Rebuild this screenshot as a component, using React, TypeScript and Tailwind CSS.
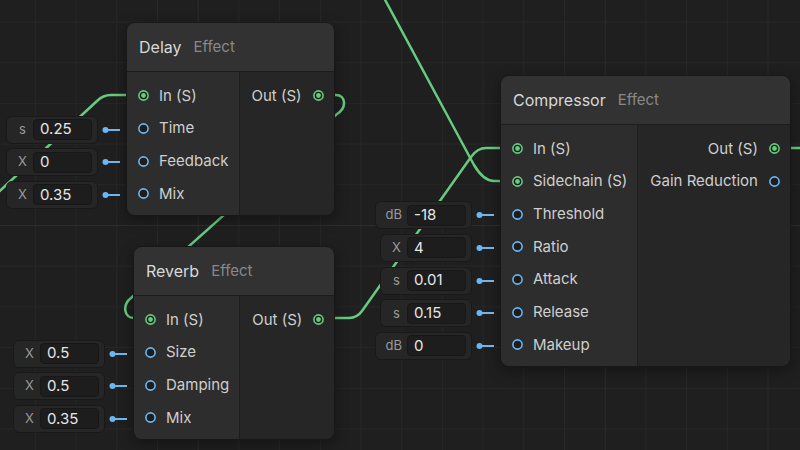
import React from 'react';

type Field = { unit: string; value: string };
type Port = { label: string; signal?: boolean; field?: Field };

interface NodeProps {
  x: number;
  y: number;
  title: string;
  inputs: Port[];
  outputs: Port[];
}

const GREEN = '#66cb7f';
const BLUE = '#6cb6f0';

function Socket({ signal }: { signal?: boolean }) {
  return (
    <svg width="11" height="11" viewBox="0 0 11 11" className="shrink-0">
      <circle cx="5.5" cy="5.5" r="4.6" fill="#1c1c1c" stroke={signal ? GREEN : BLUE} strokeWidth="1.6" />
      {signal && <circle cx="5.5" cy="5.5" r="2.4" fill={GREEN} />}
    </svg>
  );
}

function ValueField({ unit, value }: Field) {
  return (
    <div className="flex items-center gap-[4px]">
      <div className="flex items-center h-[28px] px-[5px] rounded-[6px] bg-[#262626] border border-[#191919]">
        <span className="min-w-[21px] px-[5px] text-center text-[13px] text-[#9a9a9a]">{unit}</span>
        <div className="w-[59px] h-[21px] flex items-center pl-[6px] rounded-[4px] bg-[#1d1d1d] border border-[#171717] text-[15px] text-[#e6e6e6]">
          {value}
        </div>
      </div>
      <svg width="18" height="8" viewBox="0 0 18 8">
        <line x1="3.5" y1="4" x2="18" y2="4" stroke={BLUE} strokeWidth="2" />
        <circle cx="3.5" cy="4" r="3" fill={BLUE} />
      </svg>
    </div>
  );
}

function GraphNode({ x, y, title, inputs, outputs }: NodeProps) {
  return (
    <div className="absolute" style={{ left: x, top: y }}>
      {/* parameter fields wired into the node from the left */}
      <div className="absolute right-full top-[51px] pt-[7.5px] mr-[6px] flex flex-col items-end">
        {inputs.map((p, i) => (
          <div key={i} className="h-[32.7px] flex items-center">
            {p.field && <ValueField {...p.field} />}
          </div>
        ))}
      </div>

      <div className="rounded-[9px] border border-[#181818] overflow-hidden shadow-[0_4px_14px_rgba(0,0,0,0.35)]">
        <div className="h-[49px] flex items-center gap-3 px-3 bg-[#323232] border-b border-[#1c1c1c]">
          <span className="text-[16px] text-[#d8d8d8]">{title}</span>
          <span className="text-[15px] text-[#888888]">Effect</span>
        </div>
        <div className="flex">
          <div className="pl-[11px] pr-[10px] pt-[7.5px] pb-[5px] bg-[#2d2d2d] border-r border-[#1e1e1e]">
            {inputs.map((p, i) => (
              <div key={i} className="h-[32.7px] flex items-center gap-[10px]">
                <Socket signal={p.signal} />
                <span className="text-[15px] text-[#cfcfcf] whitespace-nowrap">{p.label}</span>
              </div>
            ))}
          </div>
          <div className="flex-1 pl-3 pr-[10px] pt-[7.5px] pb-[5px] bg-[#262626]">
            {outputs.map((p, i) => (
              <div key={i} className="h-[32.7px] flex items-center justify-end gap-[11px]">
                <span className="text-[15px] text-[#cfcfcf] whitespace-nowrap">{p.label}</span>
                <Socket signal={p.signal} />
              </div>
            ))}
          </div>
        </div>
      </div>
    </div>
  );
}

function Grid() {
  const xs = Array.from({ length: 21 }, (_, k) => 35.4 + (k - 1) * 40.7);
  const ys = Array.from({ length: 13 }, (_, k) => 22 + (k - 1) * 40.7);
  return (
    <svg className="absolute inset-0" width="800" height="450">
      {xs.map((v, k) => (
        <line key={'x' + k} x1={v} y1="0" x2={v} y2="450" stroke={k === 5 || k === 15 ? '#2e2e2e' : '#282828'} strokeWidth="1" />
      ))}
      {ys.map((v, k) => (
        <line key={'y' + k} x1="0" y1={v} x2="800" y2={v} stroke={k === 6 ? '#2e2e2e' : '#282828'} strokeWidth="1" />
      ))}
    </svg>
  );
}

function Wires() {
  return (
    <svg className="absolute inset-0" width="800" height="450" fill="none" stroke={GREEN} strokeWidth="2.5" strokeLinecap="round">
      <path d="M 383 -4 L 474 165 Q 483.6 181 494 181 L 502 181" />
      <path d="M 330 318 L 349 318 Q 357 318 362 311 L 471 157 Q 477.4 148 486 148 L 502 148" />
      <path d="M 130 95 L 111 95 Q 103 95 97 101 L -10 200" />
      <path d="M 330 95 L 336 95 C 346 95 347 108 337 114 L 131 298 C 122 305 124 318 134 318" />
      <path d="M 788 148 L 806 148" />
    </svg>
  );
}

export default function App() {
  return (
    <div className="relative w-[800px] h-[450px] overflow-hidden bg-[#1f1f1f] font-['Inter',sans-serif]">
      <Grid />
      <Wires />

      <GraphNode
        x={126}
        y={22}
        title="Delay"
        inputs={[
          { label: 'In (S)', signal: true },
          { label: 'Time', field: { unit: 's', value: '0.25' } },
          { label: 'Feedback', field: { unit: 'X', value: '0' } },
          { label: 'Mix', field: { unit: 'X', value: '0.35' } },
        ]}
        outputs={[{ label: 'Out (S)', signal: true }]}
      />

      <GraphNode
        x={133}
        y={246}
        title="Reverb"
        inputs={[
          { label: 'In (S)', signal: true },
          { label: 'Size', field: { unit: 'X', value: '0.5' } },
          { label: 'Damping', field: { unit: 'X', value: '0.5' } },
          { label: 'Mix', field: { unit: 'X', value: '0.35' } },
        ]}
        outputs={[{ label: 'Out (S)', signal: true }]}
      />

      <GraphNode
        x={500}
        y={75}
        title="Compressor"
        inputs={[
          { label: 'In (S)', signal: true },
          { label: 'Sidechain (S)', signal: true },
          { label: 'Threshold', field: { unit: 'dB', value: '-18' } },
          { label: 'Ratio', field: { unit: 'X', value: '4' } },
          { label: 'Attack', field: { unit: 's', value: '0.01' } },
          { label: 'Release', field: { unit: 's', value: '0.15' } },
          { label: 'Makeup', field: { unit: 'dB', value: '0' } },
        ]}
        outputs={[
          { label: 'Out (S)', signal: true },
          { label: 'Gain Reduction' },
        ]}
      />
    </div>
  );
}
